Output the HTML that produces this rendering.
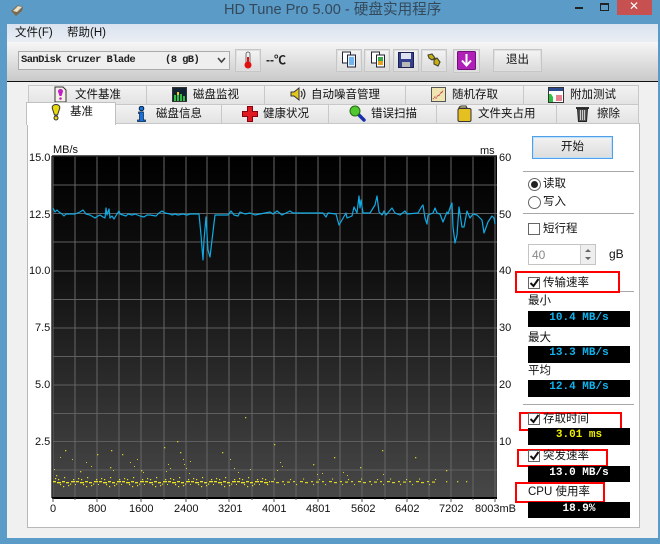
<!DOCTYPE html>
<html lang="zh"><head><meta charset="utf-8"><title>HD Tune Pro 5.00</title>
<style>
html{margin:0;padding:0;width:660px;height:544px;overflow:hidden;background:#5b9bc8}
body{margin:0;padding:0;width:660px;height:544px;overflow:hidden;background:#5b9bc8;position:relative;font:12px/14px "Liberation Sans","Noto Sans CJK SC",sans-serif;color:#111;filter:blur(.3px)}
div,span,svg{position:absolute;box-sizing:border-box}
.t{white-space:nowrap;line-height:14px;height:14px}
.tab{background:linear-gradient(#f2f2f2,#e2e2e2);border:1px solid #c8c8c8;border-bottom:0}
.tb{background:linear-gradient(#f3f3f3,#dcdcdc);border:2px solid #e0e0e0;outline:1px solid #c6c6c6;outline-offset:-1px}
.sep{height:1px;background:#a8a8a8;left:523px;width:111px}
.box{background:#000;left:528px;width:102px;font:bold 11px/14px "Liberation Mono",monospace;text-align:center;white-space:pre}
.red{border:2px solid #f00}
.cb{left:528px;width:12px;height:12px;border:1px solid #666;background:#fff}
.lab{font-size:11px;line-height:12px;white-space:nowrap;height:12px;color:#111}
</style></head><body>
<!-- title bar -->
<svg style="left:10px;top:3px" width="15" height="14" viewBox="0 0 15 14"><path d="M1 8 8 2l5 2-1 4-6 5z" fill="#7a6a50"/><path d="M3 8l5-5 4 1-5 5z" fill="#e8e0c8"/></svg>
<div class="t" style="left:224px;top:2px;font-size:14.6px;line-height:17px;height:17px;color:#34495a">HD Tune Pro 5.00 - 硬盘实用程序</div>
<div style="left:575px;top:7px;width:8px;height:2px;background:#222"></div>
<div style="left:600px;top:3px;width:9px;height:8px;border:1px solid #222;border-top-width:2px"></div>
<div style="left:617px;top:0;width:35px;height:15px;background:#c75050"></div>
<div class="t" style="left:629px;top:0;width:14px;height:14px;color:#fff;font:bold 12px/13px 'Liberation Sans','DejaVu Sans',sans-serif">✕</div>
<!-- window -->
<div style="left:7px;top:24px;width:651px;height:514px;background:#f0f0f0"></div>
<div style="left:7px;top:24px;width:651px;height:18px;background:linear-gradient(#d9e3ef,#eaeef4)"></div>
<div class="t" style="left:15px;top:26px;font-size:11.5px">文件(F)</div>
<div class="t" style="left:67px;top:26px;font-size:11.5px">帮助(H)</div>
<div style="left:7px;top:42px;width:651px;height:39px;background:linear-gradient(#f6f6f6,#c9c9c9)"></div>
<div style="left:7px;top:81px;width:651px;height:1px;background:#111"></div>
<!-- drive select -->
<div style="left:18px;top:51px;width:212px;height:19px;background:#efefef;border:1px solid #ababab"></div>
<div class="t" style="left:21px;top:53px;font:bold 10.5px/14px 'Liberation Mono',monospace;letter-spacing:-.6px;color:#222">SanDisk Cruzer Blade</div>
<div class="t" style="left:165px;top:53px;font:bold 10.5px/14px 'Liberation Mono',monospace;letter-spacing:-.6px;color:#222">(8 gB)</div>
<svg style="left:217px;top:57px" width="9" height="7" viewBox="0 0 9 7"><path d="M1 1l3.500 4L8 1" fill="none" stroke="#444" stroke-width="1.600"/></svg>
<div class="tb" style="left:235px;top:49px;width:26px;height:23px"></div>
<svg style="left:242px;top:51px" width="12" height="19" viewBox="0 0 12 19"><rect x="4" y="1" width="4" height="12" rx="2" fill="#eee" stroke="#555" stroke-width=".8"/><rect x="5" y="6" width="2" height="8" fill="#e01010"/><circle cx="6" cy="14" r="3.500" fill="#e01010"/></svg>
<div class="t" style="left:266px;top:53px;font-weight:bold;font-size:12px;color:#222">--℃</div>
<!-- toolbar buttons -->
<div class="tb" style="left:336px;top:49px;width:26px;height:23px"></div>
<svg style="left:341px;top:51px" width="16" height="17" viewBox="0 0 16 17"><rect x="1.500" y="1" width="8" height="11" fill="#fff" stroke="#223"/><rect x="6.500" y="4" width="8" height="12" fill="#e8f2ff" stroke="#223"/><path d="M8 7h5M8 9h5M8 11h5M8 13h5" stroke="#2a90e8" stroke-width="1.200"/></svg>
<div class="tb" style="left:364px;top:49px;width:26px;height:23px"></div>
<svg style="left:370px;top:51px" width="16" height="17" viewBox="0 0 16 17"><rect x="1.500" y="1" width="8" height="11" fill="#fff" stroke="#223"/><rect x="6.500" y="4" width="8" height="12" fill="#fff" stroke="#223"/><rect x="8" y="6" width="5" height="4" fill="#38a848"/><rect x="8" y="10" width="5" height="4" fill="#e8a020"/></svg>
<div class="tb" style="left:393px;top:49px;width:26px;height:23px"></div>
<svg style="left:398px;top:52px" width="16" height="16" viewBox="0 0 16 16"><rect x=".5" y=".5" width="15" height="15" fill="#34408c" stroke="#1c2050"/><rect x="3" y="1" width="10" height="6" fill="#dfe3f0"/><rect x="4" y="10" width="8" height="5" fill="#b8b8b8"/></svg>
<div class="tb" style="left:421px;top:49px;width:26px;height:23px"></div>
<svg style="left:426px;top:52px" width="16" height="16" viewBox="0 0 16 16"><path d="M2 3l4-1 3 4-3 2-3-2zM8 8l3-2 3 4-2 4-4-2z" fill="#c8b010" stroke="#443" stroke-width="1.100"/></svg>
<div class="tb" style="left:453px;top:49px;width:27px;height:24px"></div>
<svg style="left:457px;top:51px" width="19" height="19" viewBox="0 0 19 19"><rect x=".5" y=".5" width="18" height="18" rx="1" fill="#b020b8" stroke="#701078"/><path d="M9.500 3v11M5 9.500l4.500 5 4.500-5" fill="none" stroke="#fff" stroke-width="2"/></svg>
<div class="tb" style="left:493px;top:49px;width:49px;height:23px"></div>
<div class="t" style="left:506px;top:53px;font-size:11.5px">退出</div>
<!-- tabs top -->
<div class="tab" style="left:28px;top:85px;width:119px;height:20px"></div>
<div class="tab" style="left:146px;top:85px;width:119px;height:20px"></div>
<div class="tab" style="left:264px;top:85px;width:142px;height:20px"></div>
<div class="tab" style="left:405px;top:85px;width:119px;height:20px"></div>
<div class="tab" style="left:523px;top:85px;width:116px;height:20px"></div>
<div class="t" style="left:75px;top:88px;font-size:11.5px">文件基准</div>
<div class="t" style="left:193px;top:88px;font-size:11.5px">磁盘监视</div>
<div class="t" style="left:311px;top:88px;font-size:11.5px">自动噪音管理</div>
<div class="t" style="left:452px;top:88px;font-size:11.5px">随机存取</div>
<div class="t" style="left:570px;top:88px;font-size:11.5px">附加测试</div>
<svg style="left:54px;top:86px" width="13" height="17" viewBox="0 0 13 17"><path d="M1 1h8l3 3v12H1z" fill="#f4f0e4" stroke="#333"/><path d="M6.500 3c2 0 2.500 1.500 2.500 2.500L7.500 10h-2L4 5.500C4 4 5 3 6.500 3z" fill="#c020c8"/><circle cx="6.500" cy="12.500" r="1.300" fill="#c020c8"/></svg>
<svg style="left:172px;top:87px" width="15" height="15" viewBox="0 0 15 15"><rect x=".5" y=".5" width="14" height="14" fill="#123" stroke="#333"/><path d="M2 14V8h2v6zM5 14V5h2v9zM8 14V7h2v7zM11 14V9h2v5z" fill="#30c040"/><path d="M5 5h2v3H5z" fill="#e8d020"/></svg>
<svg style="left:290px;top:86px" width="16" height="16" viewBox="0 0 16 16"><path d="M1 6h3l5-4v12L4 10H1z" fill="#e0c820" stroke="#333"/><path d="M11 5c1.500 2 1.500 4 0 6M13 3c2.500 3 2.500 7 0 10" fill="none" stroke="#333" stroke-width="1.200"/></svg>
<svg style="left:431px;top:87px" width="15" height="15" viewBox="0 0 15 15"><rect x=".5" y=".5" width="14" height="14" fill="#f0e4b0" stroke="#555"/><path d="M2 12l2-2 1 1 2-3 1 1 2-4 1 1 1-3" fill="none" stroke="#c04050" stroke-width="1.200" stroke-dasharray="1 1"/></svg>
<svg style="left:548px;top:87px" width="16" height="16" viewBox="0 0 16 16"><rect x=".5" y=".5" width="15" height="15" fill="#fff" stroke="#333"/><rect x="1" y="1" width="14" height="3" fill="#2b4a90"/><path d="M1 15V7h2l2 3v5z" fill="#30c040"/><rect x="8" y="8" width="6" height="6" fill="#e04860" opacity=".7"/></svg>
<!-- tabs second -->
<div class="tab" style="left:115px;top:104px;width:107px;height:20px"></div>
<div class="tab" style="left:221px;top:104px;width:108px;height:20px"></div>
<div class="tab" style="left:328px;top:104px;width:109px;height:20px"></div>
<div class="tab" style="left:436px;top:104px;width:121px;height:20px"></div>
<div class="tab" style="left:556px;top:104px;width:83px;height:20px"></div>
<!-- content panel -->
<div style="left:27px;top:123px;width:613px;height:405px;background:#fff;border:1px solid #b8b8b8;border-top-color:#c8c8c8"></div>
<div style="left:26px;top:102px;width:90px;height:23px;background:#fff;border:1px solid #c0c0c0;border-bottom:0"></div>
<div class="t" style="left:70px;top:105px;font-size:11.5px">基准</div>
<div class="t" style="left:156px;top:107px;font-size:11.5px">磁盘信息</div>
<div class="t" style="left:263px;top:107px;font-size:11.5px">健康状况</div>
<div class="t" style="left:371px;top:107px;font-size:11.5px">错误扫描</div>
<div class="t" style="left:478px;top:107px;font-size:11.5px">文件夹占用</div>
<div class="t" style="left:597px;top:107px;font-size:11.5px">擦除</div>
<svg style="left:51px;top:104px" width="10" height="17" viewBox="0 0 10 17"><path d="M5 .5c2.500 0 4 1.500 3.800 3.500L6.500 11h-3L1.200 4C1 2 2.500.5 5 .5z" fill="#e8d810" stroke="#333"/><circle cx="5" cy="14" r="2" fill="#e8d810" stroke="#333"/></svg>
<svg style="left:137px;top:106px" width="9" height="16" viewBox="0 0 9 16"><circle cx="4.500" cy="2.500" r="2.300" fill="#1a70d8" stroke="#024"/><path d="M1.500 6h5v8h2v1.500H.5V14h2V7.500h-1z" fill="#1a70d8" stroke="#024" stroke-width=".7"/></svg>
<svg style="left:242px;top:106px" width="16" height="16" viewBox="0 0 16 16"><path d="M5.500.5h5v5h5v5h-5v5h-5v-5h-5v-5h5z" fill="#e01820" stroke="#801"/></svg>
<svg style="left:349px;top:105px" width="17" height="17" viewBox="0 0 17 17"><path d="M9 9l6 6" stroke="#1830a8" stroke-width="3.400" stroke-linecap="round"/><circle cx="6" cy="6" r="5" fill="#50c830" stroke="#286818"/></svg>
<svg style="left:457px;top:105px" width="15" height="17" viewBox="0 0 15 17"><path d="M2 3c0-1 1-2 3-2h4l1 2z" fill="#f4e8a0" stroke="#333"/><rect x="1" y="3.500" width="13" height="13" rx="1.500" fill="#e4c020" stroke="#333"/></svg>
<svg style="left:575px;top:105px" width="15" height="17" viewBox="0 0 15 17"><path d="M1 2h13v2H1z" fill="#333"/><path d="M2.500 4h10l-1 12.500h-8z" fill="#555" stroke="#222"/><path d="M5.500 5v10M7.500 5v10M9.500 5v10" stroke="#ccc"/></svg>
<!-- chart -->
<svg style="left:0;top:0" width="660" height="544" viewBox="0 0 660 544">
<defs>
<linearGradient id="g" x1="0" y1="0" x2="0" y2="1"><stop offset="0" stop-color="#000"/><stop offset=".35" stop-color="#111"/><stop offset="1" stop-color="#484848"/></linearGradient>
<pattern id="p1" x="53" y="475" width="23" height="13" patternUnits="userSpaceOnUse">
<g fill="#ece420"><rect x="0" y="6" width="3" height="1.300"/><rect x="4" y="7" width="4" height="1.300"/><rect x="9" y="6" width="3" height="1.300"/><rect x="13" y="7" width="3" height="1.300"/><rect x="18" y="6" width="4" height="1.300"/><rect x="2" y="3" width="1.200" height="1.200"/><rect x="7" y="9" width="1.200" height="1.200"/><rect x="11" y="2" width="1.200" height="1.200"/><rect x="15" y="10" width="1.200" height="1.200"/><rect x="20" y="4" width="1.200" height="1.200"/><rect x="5" y="4" width="1.200" height="1.200"/><rect x="17" y="8.500" width="1.200" height="1.200"/><rect x="10" y="11" width="1.200" height="1.200"/><rect x="22" y="9" width="1" height="1"/></g></pattern>
<pattern id="p2" x="270" y="475" width="29" height="13" patternUnits="userSpaceOnUse">
<g fill="#dcd420"><rect x="1" y="6" width="3" height="1.200"/><rect x="6" y="7" width="3" height="1.200"/><rect x="12" y="6" width="2" height="1.200"/><rect x="17" y="6.500" width="3" height="1.200"/><rect x="23" y="6" width="2" height="1.200"/><rect x="4" y="3.500" width="1.100" height="1.100"/><rect x="14" y="9" width="1.100" height="1.100"/><rect x="20" y="4" width="1.100" height="1.100"/><rect x="26" y="9" width="1.100" height="1.100"/></g></pattern>
</defs>
<rect x="52" y="156" width="445" height="342" fill="url(#g)"/>
<path d="M52 185H497M52 213.500H497M52 242H497M52 271H497M52 299.500H497M52 328H497M52 356.500H497M52 385H497M52 413.500H497M52 441.500H497M52 470H497" stroke="#5e5e5e" stroke-width="1"/>
<path d="M53 156V498M75 156V498M97 156V498M119 156V498M141 156V498M164 156V498M186 156V498M207 156V498M229 156V498M252 156V498M274 156V498M296 156V498M318 156V498M340 156V498M362 156V498M385 156V498M407 156V498M429 156V498M451 156V498M473 156V498M495 156V498" stroke="#666" stroke-width="1"/>
<path d="M52 156H497M52 156V498" stroke="#222" stroke-width="1.400"/>
<path d="M52 498H497" stroke="#000" stroke-width="2"/>
<path d="M53 498v4M75 498v2M97 498v4M119 498v2M141 498v4M164 498v2M186 498v4M207 498v2M229 498v4M252 498v2M274 498v4M296 498v2M318 498v4M340 498v2M362 498v4M385 498v2M407 498v4M429 498v2M451 498v4M473 498v2M495 498v4" stroke="#555" stroke-width="1"/>
<!-- yellow band -->
<rect x="53" y="475" width="217" height="13" fill="url(#p1)"/>
<rect x="270" y="475" width="168" height="13" fill="url(#p2)"/>
<!-- scattered dots -->
<g fill="#e4dc20" opacity=".9">
<rect x="60" y="457" width="1" height="1"/><rect x="65" y="450" width="1.300" height="1.300"/><rect x="72" y="459" width="1" height="1"/><rect x="54" y="469" width="1" height="1"/><rect x="56" y="475" width="1.300" height="1.300"/><rect x="80" y="471" width="1.300" height="1.300"/><rect x="86" y="462" width="1" height="1"/><rect x="91" y="466" width="1" height="1"/><rect x="97" y="454" width="1.300" height="1.300"/><rect x="111" y="450" width="1.300" height="1.300"/><rect x="122" y="454" width="1.300" height="1.300"/><rect x="110" y="467" width="1.300" height="1.300"/><rect x="113" y="470" width="1" height="1"/><rect x="130" y="462" width="1" height="1"/><rect x="134" y="466" width="1" height="1"/><rect x="137" y="459" width="1" height="1"/><rect x="141" y="470" width="1.300" height="1.300"/><rect x="143" y="472" width="1" height="1"/><rect x="164" y="447" width="1.300" height="1.300"/><rect x="177" y="441" width="1.300" height="1.300"/><rect x="180" y="452" width="1.300" height="1.300"/><rect x="168" y="464" width="1" height="1"/><rect x="170" y="468" width="1" height="1"/><rect x="166" y="471" width="1" height="1"/><rect x="183" y="459" width="1" height="1"/><rect x="190" y="461" width="1" height="1"/><rect x="184" y="464" width="1" height="1"/><rect x="186" y="468" width="1" height="1"/><rect x="189" y="473" width="1" height="1"/><rect x="222" y="452" width="1.300" height="1.300"/><rect x="230" y="459" width="1" height="1"/><rect x="234" y="468" width="1" height="1"/><rect x="238" y="472" width="1" height="1"/><rect x="250" y="469" width="1" height="1"/><rect x="274" y="444" width="1.300" height="1.300"/><rect x="280" y="462" width="1" height="1"/><rect x="282" y="466" width="1" height="1"/><rect x="277" y="470" width="1" height="1"/><rect x="313" y="464" width="1.300" height="1.300"/><rect x="322" y="473" width="1" height="1"/><rect x="317" y="474" width="1" height="1"/><rect x="334" y="457" width="1.300" height="1.300"/><rect x="343" y="472" width="1" height="1"/><rect x="347" y="475" width="1" height="1"/><rect x="360" y="467" width="1.300" height="1.300"/><rect x="382" y="450" width="1.300" height="1.300"/><rect x="383" y="474" width="1" height="1"/><rect x="415" y="457" width="1.300" height="1.300"/><rect x="446" y="470" width="1.300" height="1.300"/><rect x="446" y="481" width="1.300" height="1.300"/><rect x="457" y="481" width="1.300" height="1.300"/><rect x="466" y="481" width="1.300" height="1.300"/><rect x="245" y="417" width="1.300" height="1.300"/>
</g>
<!-- transfer line -->
<polyline fill="none" stroke="#10aae4" stroke-width="1.200" stroke-linejoin="round" points="53,208 55,212 57,210 59,212 62,214 64,216 66,214 70,214 75,214 80,212 83,210 86,214 90,215 95,218 98,216 100,215 103,217 105,218 106,208 107,215 109,209 110,218 112,216 114,219 117,214 119,211 120,214 123,215 126,216 128,214 132,215 135,214 140,216 144,217 147,215 150,215 156,216 159,213 162,211 165,213 170,214 172,215 175,214 178,215 183,214 187,215 190,214 195,214 199,214 201,235 203,260 204,240 206,217 208,250 210,257 212,240 215,215 222,215 228,215 231,211 234,215 238,216 240,212 245,214 250,213 255,215 260,214 265,213 270,212 273,214 277,211 282,215 290,211 293,213 300,213 310,213 323,213 326,217 328,213 336,214 339,225 342,220 346,213 347,218 352,216 354,207 357,213 359,196 360,208 361,200 363,213 370,213 375,205 377,196 379,212 382,215 384,211 386,215 392,208 395,213 400,215 405,211 407,214 418,213 422,206 423,205 425,218 427,224 428,215 433,213 435,208 437,213 440,214 443,222 447,212 448,214 451,205 452,203 453,227 455,243 457,235 459,207 462,227 464,227 467,211 470,218 473,214 477,215 482,220 484,233 488,222 492,216 494,218 495,224"/>
</svg>
<!-- axis labels -->
<div class="lab" style="left:53px;top:144px">MB/s</div>
<div class="lab" style="left:480px;top:145px">ms</div>
<div class="lab" style="left:29px;top:152px">15.0</div>
<div class="lab" style="left:29px;top:209px">12.5</div>
<div class="lab" style="left:29px;top:265px">10.0</div>
<div class="lab" style="left:35px;top:322px">7.5</div>
<div class="lab" style="left:35px;top:379px">5.0</div>
<div class="lab" style="left:35px;top:436px">2.5</div>
<div class="lab" style="left:499px;top:152px">60</div>
<div class="lab" style="left:499px;top:209px">50</div>
<div class="lab" style="left:499px;top:265px">40</div>
<div class="lab" style="left:499px;top:322px">30</div>
<div class="lab" style="left:499px;top:379px">20</div>
<div class="lab" style="left:499px;top:436px">10</div>
<div class="lab" style="left:50px;top:503px">0</div>
<div class="lab" style="left:88px;top:503px">800</div>
<div class="lab" style="left:129px;top:503px">1600</div>
<div class="lab" style="left:174px;top:503px">2400</div>
<div class="lab" style="left:218px;top:503px">3201</div>
<div class="lab" style="left:262px;top:503px">4001</div>
<div class="lab" style="left:306px;top:503px">4801</div>
<div class="lab" style="left:351px;top:503px">5602</div>
<div class="lab" style="left:395px;top:503px">6402</div>
<div class="lab" style="left:439px;top:503px">7202</div>
<div class="lab" style="left:475px;top:503px">8003mB</div>
<!-- right panel -->
<div style="left:532px;top:136px;width:81px;height:23px;background:linear-gradient(#f2f2f2,#dcdcdc);border:1px solid #4fa0e8;box-shadow:inset 0 0 0 1px #bfe0fa"></div>
<div class="t" style="left:561px;top:140px;font-size:11.5px">开始</div>
<div class="sep" style="top:171px"></div>
<div style="left:528px;top:178px;width:13px;height:13px;border:1px solid #666;border-radius:50%;background:#fff"></div>
<div style="left:531px;top:181px;width:7px;height:7px;border-radius:50%;background:#222"></div>
<div class="t" style="left:543px;top:177px;font-size:11.5px">读取</div>
<div style="left:528px;top:196px;width:13px;height:13px;border:1px solid #666;border-radius:50%;background:#fff"></div>
<div class="t" style="left:543px;top:195px;font-size:11.5px">写入</div>
<div class="sep" style="top:213px"></div>
<div class="cb" style="top:223px"></div>
<div class="t" style="left:543px;top:222px;font-size:11.5px">短行程</div>
<div style="left:528px;top:244px;width:68px;height:21px;border:1px solid #c4c4c4;background:#fff"></div>
<div class="t" style="left:532px;top:248px;color:#888">40</div>
<div style="left:580px;top:245px;width:15px;height:19px;background:#eee;border-left:1px solid #ccc"></div>
<svg style="left:584px;top:248px" width="8" height="13" viewBox="0 0 8 13"><path d="M4 1 7 4H1zM4 12 1 9h6z" fill="#666"/></svg>
<div class="t" style="left:609px;top:247px">gB</div>
<div class="sep" style="top:291px;left:620px;width:14px"></div>
<div class="red" style="left:515px;top:271px;width:105px;height:22px"></div>
<div class="cb" style="top:277px"></div>
<svg style="left:529px;top:278px" width="11" height="10" viewBox="0 0 11 10"><path d="M1.500 5l3 3 5-7" fill="none" stroke="#111" stroke-width="2"/></svg>
<div class="t" style="left:543px;top:276px;font-size:11.5px">传输速率</div>
<div class="t" style="left:528px;top:294px;font-size:11.5px">最小</div>
<div class="box" style="top:311px;height:16px;color:#10b4f0">10.4 MB/s</div>
<div class="t" style="left:528px;top:331px;font-size:11.5px">最大</div>
<div class="box" style="top:346px;height:17px;color:#10b4f0">13.3 MB/s</div>
<div class="t" style="left:528px;top:364px;font-size:11.5px">平均</div>
<div class="box" style="top:380px;height:17px;color:#10b4f0">12.4 MB/s</div>
<div class="sep" style="top:404px"></div>
<div class="red" style="left:519px;top:412px;width:103px;height:19px"></div>
<div class="cb" style="top:413px"></div>
<svg style="left:529px;top:414px" width="11" height="10" viewBox="0 0 11 10"><path d="M1.500 5l3 3 5-7" fill="none" stroke="#111" stroke-width="2"/></svg>
<div class="t" style="left:543px;top:412px;font-size:11.5px">存取时间</div>
<div class="box" style="top:428px;height:17px;color:#f0f000">3.01 ms</div>
<div class="red" style="left:517px;top:449px;width:91px;height:18px"></div>
<div class="cb" style="top:450px"></div>
<svg style="left:529px;top:451px" width="11" height="10" viewBox="0 0 11 10"><path d="M1.500 5l3 3 5-7" fill="none" stroke="#111" stroke-width="2"/></svg>
<div class="t" style="left:543px;top:449px;font-size:11.5px">突发速率</div>
<div class="box" style="top:466px;height:16px;color:#fff">13.0 MB/s</div>
<div class="red" style="left:515px;top:482px;width:90px;height:21px"></div>
<div class="t" style="left:528px;top:485px;font-size:11.5px">CPU 使用率</div>
<div class="box" style="top:502px;height:16px;color:#fff">18.9%</div>
</body></html>
